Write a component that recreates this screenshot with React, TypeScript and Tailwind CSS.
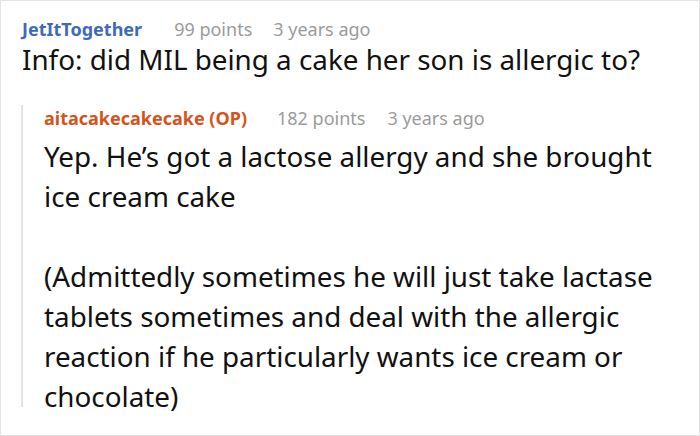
export default function App() {
  return (
    <div className="w-[700px] h-[436px] bg-white border border-[#e3e3e3] overflow-hidden font-['Noto_Sans',sans-serif]">
      <div className="pl-[21px] pt-[15px]">
        <div className="flex items-baseline text-[18px] leading-[26px]">
          <span className="font-bold text-[#3e6cb4]">JetItTogether</span>
          <span className="ml-[32px] text-[#9b9b9b]">99 points</span>
          <span className="ml-[21px] text-[#9b9b9b]">3 years ago</span>
        </div>
        <p className="text-[27.8px] leading-[34px] text-[#111]">
          Info: did MIL being a cake her son is allergic to?
        </p>
      </div>
      <div className="ml-[20px] mt-[40px] border-l-2 border-[#e4e4e4] pl-[21px] h-[302px]">
        <div className="-mt-[11px] flex items-baseline text-[18px] leading-[26px]">
          <span className="font-bold text-[#d5531b]">aitacakecakecake (OP)</span>
          <span className="ml-[30px] text-[#9b9b9b]">182 points</span>
          <span className="ml-[22px] text-[#9b9b9b]">3 years ago</span>
        </div>
        <div className="text-[27.8px] leading-[40px] text-[#111] mt-[5px]">
          <p>Yep. He’s got a lactose allergy and she brought<br />ice cream cake</p>
          <p className="mt-[40px]">
            (Admittedly sometimes he will just take lactase<br />
            tablets sometimes and deal with the allergic<br />
            reaction if he particularly wants ice cream or<br />
            chocolate)
          </p>
        </div>
      </div>
    </div>
  );
}
